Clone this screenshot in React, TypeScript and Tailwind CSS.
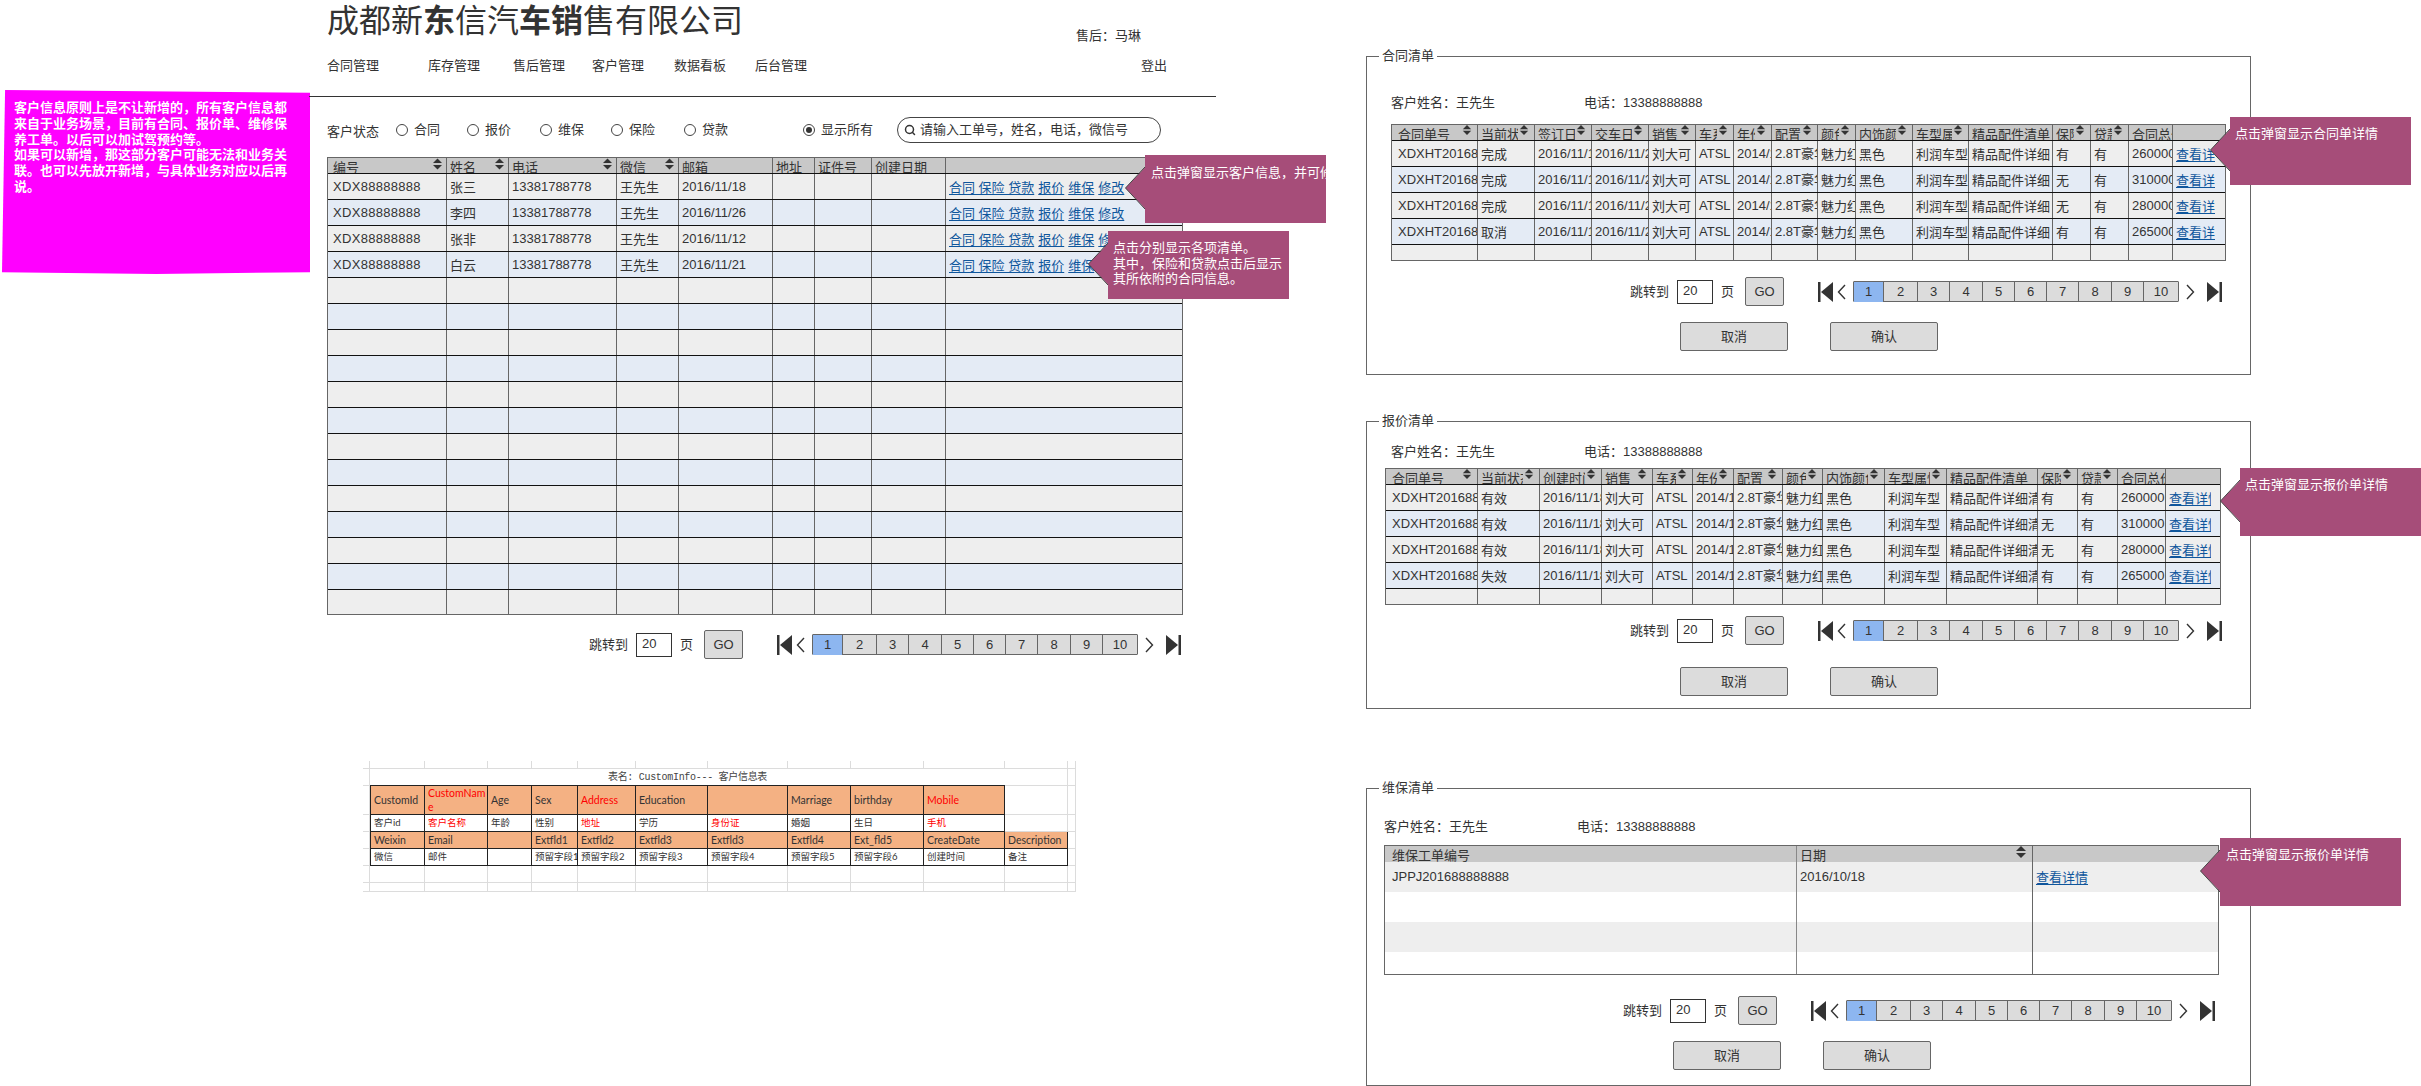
import type { ReactNode } from "react";
import { Search } from "lucide-react";

const FONT = "font-['Liberation_Sans','Noto_Sans_CJK_SC',sans-serif]";

function SortIcon({ className }: { className: string }) {
  return (
    <svg viewBox="0 0 10 12" className={"absolute " + className} fill="#333">
      <path d="M5 0 L10 5 H0 Z" />
      <path d="M5 12 L10 7 H0 Z" />
    </svg>
  );
}

function LinkText({ children }: { children: ReactNode }) {
  return <span className="text-[#0f569c] underline underline-offset-2">{children}</span>;
}

type Head = { label: string; sort?: boolean };

function DataTable({
  cols,
  width,
  heads,
  rows,
  lastRow,
  sortPos,
  firstPad,
}: {
  cols: string;
  width: string;
  heads: Head[];
  rows: ReactNode[][];
  lastRow: string;
  sortPos: string;
  firstPad: string;
}) {
  return (
    <div className={"border border-[#666] text-[13px] text-[#333] " + width}>
      <div className={"grid h-[16px] bg-[#c8c8c8] border-b border-[#111] " + cols}>
        {heads.map((h, i) => (
          <div
            key={i}
            className={
              "relative h-[15px] overflow-hidden whitespace-nowrap leading-[14px] pt-[3px] border-[#666] " +
              (i === heads.length - 1 ? "" : "border-r ") +
              (i === 0 ? firstPad : "pl-[3px]")
            }
          >
            <div className={"overflow-hidden " + (h.sort ? "mr-[16px]" : "")}>{h.label}</div>
            {h.sort && <SortIcon className={sortPos} />}
          </div>
        ))}
      </div>
      {rows.map((row, r) => {
        const isLast = r === rows.length - 1;
        return (
          <div
            key={r}
            className={
              "grid " +
              cols +
              " " +
              (r % 2 === 0 ? "bg-[#eeeeee] " : "bg-[#e4ebf5] ") +
              (isLast ? lastRow : "h-[26px] border-b border-[#111]")
            }
          >
            {row.map((c, i) => (
              <div
                key={i}
                className={
                  "flex items-center overflow-hidden whitespace-nowrap border-[#666] " +
                  (i === row.length - 1 ? "" : "border-r ") +
                  (i === 0 ? firstPad : "pl-[3px]")
                }
              >
                {c}
              </div>
            ))}
          </div>
        );
      })}
    </div>
  );
}

function Pager({ className }: { className: string }) {
  const pages = ["1", "2", "3", "4", "5", "6", "7", "8", "9", "10"];
  return (
    <div className={"flex items-center h-[29px] text-[13px] text-[#333] " + className}>
      <span className="w-[38px] whitespace-nowrap">跳转到</span>
      <div className="ml-[9px] w-[36px] h-[24px] border border-[#333] bg-white pl-[5px] leading-[20px]">20</div>
      <span className="ml-[8px] w-[13px]">页</span>
      <button className="ml-[11px] w-[39px] h-[29px] bg-[#dcdcdc] border border-[#666] rounded-[2px]">GO</button>
      <svg viewBox="0 0 15 20" className="ml-[34px] w-[15px] h-[20px]" fill="#333">
        <rect x="0" y="0" width="2.5" height="20" />
        <path d="M15 0 V20 L3 10 Z" />
      </svg>
      <svg viewBox="0 0 9 16" className="ml-[4px] w-[9px] h-[16px]" fill="none" stroke="#333" strokeWidth="1.4">
        <path d="M8 1 L1.5 8 L8 15" />
      </svg>
      <div className="ml-[7px] w-[326px] h-[21px] grid grid-cols-[30px_34px_32px_33px_32px_32px_32px_33px_32px_1fr] border border-[#666] rounded-[1px] bg-[#dcdcdc]">
        {pages.map((p, i) => (
          <div
            key={p}
            className={
              "flex items-center justify-center border-[#666] " +
              (i === 9 ? "" : "border-r ") +
              (i === 0 ? "bg-[#8db6f0]" : "")
            }
          >
            {p}
          </div>
        ))}
      </div>
      <svg viewBox="0 0 9 16" className="ml-[7px] w-[9px] h-[16px]" fill="none" stroke="#333" strokeWidth="1.4">
        <path d="M1 1 L7.5 8 L1 15" />
      </svg>
      <svg viewBox="0 0 15 20" className="ml-[12px] w-[15px] h-[20px]" fill="#333">
        <path d="M0 0 V20 L12 10 Z" />
        <rect x="12.5" y="0" width="2.5" height="20" />
      </svg>
    </div>
  );
}

function Actions({ className }: { className: string }) {
  return (
    <div className={"flex gap-[42px] text-[13px] text-[#333] " + className}>
      <button className="w-[108px] h-[29px] bg-[#dcdcdc] border border-[#666] rounded-[2px]">取消</button>
      <button className="w-[108px] h-[29px] bg-[#dcdcdc] border border-[#666] rounded-[2px]">确认</button>
    </div>
  );
}

function Callout({ className, children }: { className: string; children: ReactNode }) {
  return (
    <div className={"absolute w-[181px] h-[68px] bg-[#a64d79] text-white text-[13px] leading-[15.6px] " + className}>
      <svg viewBox="0 0 20 42" className="absolute -left-[20px] top-[12px] w-[20px] h-[42px]">
        <path d="M20.5 0 L0.5 21 L20.5 42 Z" fill="#a64d79" />
        <path d="M20 0 L0.5 21 L20 42" fill="none" stroke="#444" strokeWidth="1" />
      </svg>
      {children}
    </div>
  );
}

function Panel({
  title,
  className,
  children,
}: {
  title: string;
  className: string;
  children: ReactNode;
}) {
  return (
    <div className={"absolute left-[1366px] w-[885px] border border-[#666] " + className}>
      <div className="absolute left-[12px] -top-[9px] bg-white px-[3px] text-[13px] leading-[16px] text-[#333]">
        {title}
      </div>
      {children}
    </div>
  );
}

function CustomerLine({ className }: { className: string }) {
  return (
    <div className={"flex h-[18px] leading-[18px] text-[13px] text-[#333] " + className}>
      <span className="w-[193px]">客户姓名：王先生</span>
      <span>电话：13388888888</span>
    </div>
  );
}

const mainHeads: Head[] = [
  { label: "编号", sort: true },
  { label: "姓名", sort: true },
  { label: "电话", sort: true },
  { label: "微信", sort: true },
  { label: "邮箱" },
  { label: "地址" },
  { label: "证件号" },
  { label: "创建日期" },
  { label: "" },
];

const customers = [
  ["张三", "2016/11/18"],
  ["李四", "2016/11/26"],
  ["张非", "2016/11/12"],
  ["白云", "2016/11/21"],
];

const mainRows: ReactNode[][] = [
  ...customers.map(([name, date]) => [
    <span className="tracking-[0.3px]">XDX88888888</span>,
    <span className="pt-[3px]">{name}</span>,
    "13381788778",
    <span className="pt-[3px]">王先生</span>,
    date,
    "",
    "",
    "",
    <div className="flex gap-[4px] pt-[3px]">
      <LinkText>合同 保险 贷款</LinkText>
      <LinkText>报价</LinkText>
      <LinkText>维保</LinkText>
      <LinkText>修改</LinkText>
    </div>,
  ]),
  ...Array.from({ length: 13 }, () => ["", "", "", "", "", "", "", "", ""]),
];

const contractHeads: Head[] = [
  { label: "合同单号", sort: true },
  { label: "当前状态", sort: true },
  { label: "签订日期", sort: true },
  { label: "交车日期", sort: true },
  { label: "销售", sort: true },
  { label: "车系", sort: true },
  { label: "年份", sort: true },
  { label: "配置", sort: true },
  { label: "颜色", sort: true },
  { label: "内饰颜色", sort: true },
  { label: "车型属性", sort: true },
  { label: "精品配件清单" },
  { label: "保险", sort: true },
  { label: "贷款", sort: true },
  { label: "合同总价" },
  { label: "" },
];

const quoteHeads: Head[] = [
  { label: "合同单号", sort: true },
  { label: "当前状态", sort: true },
  { label: "创建时间", sort: true },
  { label: "销售", sort: true },
  { label: "车系", sort: true },
  { label: "年份", sort: true },
  { label: "配置", sort: true },
  { label: "颜色", sort: true },
  { label: "内饰颜色", sort: true },
  { label: "车型属性", sort: true },
  { label: "精品配件清单" },
  { label: "保险", sort: true },
  { label: "贷款", sort: true },
  { label: "合同总价" },
  { label: "" },
];

const cjk = (t: string) => <span className="pt-[3px]">{t}</span>;

const contractRows: ReactNode[][] = [
  ["完成", "有", "260000"],
  ["完成", "无", "310000"],
  ["完成", "无", "280000"],
  ["取消", "有", "265000"],
]
  .map(([state, ins, total]) => [
    "XDXHT2016888888",
    cjk(state),
    "2016/11/18",
    "2016/11/20",
    cjk("刘大可"),
    "ATSL",
    "2014/10",
    "2.8T豪华",
    cjk("魅力红"),
    cjk("黑色"),
    cjk("利润车型"),
    cjk("精品配件详细"),
    cjk(ins),
    cjk("有"),
    total,
    <div className="w-[39px] overflow-hidden pt-[3px]">
      <LinkText>查看详情</LinkText>
    </div>,
  ] as ReactNode[])
  .concat([Array.from({ length: 16 }, () => "")]);

const quoteRows: ReactNode[][] = [
  ["有效", "有", "260000"],
  ["有效", "无", "310000"],
  ["有效", "无", "280000"],
  ["失效", "有", "265000"],
]
  .map(([state, ins, total]) => [
    "XDXHT2016888888",
    cjk(state),
    "2016/11/18",
    cjk("刘大可"),
    "ATSL",
    "2014/10",
    "2.8T豪华版",
    cjk("魅力红"),
    cjk("黑色"),
    cjk("利润车型"),
    cjk("精品配件详细清单"),
    cjk(ins),
    cjk("有"),
    total,
    <div className="w-[42px] overflow-hidden pt-[3px]">
      <LinkText>查看详情</LinkText>
    </div>,
  ] as ReactNode[])
  .concat([Array.from({ length: 15 }, () => "")]);

type DbCell = { t?: string; red?: boolean; cjk?: boolean };

const dbHeadA: DbCell[] = [
  { t: "CustomId" },
  { t: "CustomNam\ne", red: true },
  { t: "Age" },
  { t: "Sex" },
  { t: "Address", red: true },
  { t: "Education" },
  {},
  { t: "Marriage" },
  { t: "birthday" },
  { t: "Mobile", red: true },
];
const dbRowA: DbCell[] = [
  { t: "客户id", cjk: true },
  { t: "客户名称", red: true, cjk: true },
  { t: "年龄", cjk: true },
  { t: "性别", cjk: true },
  { t: "地址", red: true, cjk: true },
  { t: "学历", cjk: true },
  { t: "身份证", red: true, cjk: true },
  { t: "婚姻", cjk: true },
  { t: "生日", cjk: true },
  { t: "手机", red: true, cjk: true },
];
const dbHeadB: DbCell[] = [
  { t: "Weixin" },
  { t: "Email" },
  {},
  { t: "Extfld1" },
  { t: "Extfld2" },
  { t: "Extfld3" },
  { t: "Extfld3" },
  { t: "Extfld4" },
  { t: "Ext_fld5" },
  { t: "CreateDate" },
  { t: "Description" },
];
const dbRowB: DbCell[] = [
  { t: "微信", cjk: true },
  { t: "邮件", cjk: true },
  {},
  { t: "预留字段1", cjk: true },
  { t: "预留字段2", cjk: true },
  { t: "预留字段3", cjk: true },
  { t: "预留字段4", cjk: true },
  { t: "预留字段5", cjk: true },
  { t: "预留字段6", cjk: true },
  { t: "创建时间", cjk: true },
  { t: "备注", cjk: true },
];

const LIGHT = "border-r border-b border-[#dcdcdc]";

function DbRow({ cells, orange }: { cells: DbCell[]; orange?: boolean }) {
  const blanks = 11 - cells.length;
  return (
    <>
      <div className={LIGHT} />
      {cells.map((c, i) => (
        <div
          key={i}
          className={
            "flex items-center pl-[3px] overflow-hidden whitespace-pre leading-[14px] border-r border-b border-[#222] " +
            (i === 0 ? "border-l " : "") +
            (orange ? "bg-[#f4b183] " : "bg-white ") +
            (c.red ? "text-[#ff0000] " : "text-[#333] ") +
            (c.cjk ? "text-[9.5px]" : "text-[10.5px]")
          }
        >
          {c.t}
        </div>
      ))}
      {blanks > 0 && <div className={LIGHT} />}
      <div className={LIGHT} />
    </>
  );
}

function DbSheet() {
  const blankRow = (n: number) => Array.from({ length: n }, (_, i) => <div key={i} className={LIGHT} />);
  return (
    <div className="absolute left-[363px] top-[761px] grid w-[713px] h-[131px] grid-cols-[7px_55px_63px_44px_46px_58px_72px_80px_63px_73px_81px_63px_8px] grid-rows-[8px_17px_29px_17px_17px_17px_17px_9px] font-['Lato','Noto_Sans_CJK_SC',sans-serif]">
      {blankRow(13)}
      <div className={LIGHT} />
      <div className="col-span-10 flex items-center justify-center border-b border-[#222] font-['Liberation_Mono','Noto_Sans_CJK_SC',monospace] text-[10px] tracking-[-0.3px] text-[#444]">
        表名: CustomInfo--- 客户信息表
      </div>
      <div className={LIGHT} />
      <div className={LIGHT} />
      <DbRow cells={dbHeadA} orange />
      <DbRow cells={dbRowA} />
      <DbRow cells={dbHeadB} orange />
      <DbRow cells={dbRowB} />
      {blankRow(13)}
      {blankRow(13)}
    </div>
  );
}

function RadioItem({ label, width, checked }: { label: string; width: string; checked?: boolean }) {
  return (
    <div className={"flex items-center gap-[6px] " + width}>
      <span className="flex items-center justify-center w-[12px] h-[12px] rounded-full border border-[#444] bg-white">
        {checked && <span className="w-[6px] h-[6px] rounded-full bg-[#333]" />}
      </span>
      <span>{label}</span>
    </div>
  );
}

export default function App() {
  const navItems = [
    { label: "合同管理", w: "w-[101px]" },
    { label: "库存管理", w: "w-[85px]" },
    { label: "售后管理", w: "w-[79px]" },
    { label: "客户管理", w: "w-[82px]" },
    { label: "数据看板", w: "w-[81px]" },
    { label: "后台管理", w: "w-[386px]" },
  ];

  return (
    <div className={"relative w-[2421px] h-[1086px] overflow-hidden bg-white text-[#333] " + FONT}>
      {/* 说明 */}
      <div className="absolute left-[2px] top-[90px] w-[308px] h-[184px] bg-[#ff00ff] pl-[12px] pr-[20px] pt-[10px] text-[13px] leading-[15.8px] font-bold text-white [clip-path:polygon(1%_0,100%_1.5%,100%_99%,50%_100%,0_99%)]">
        客户信息原则上是不让新增的，所有客户信息都来自于业务场景，目前有合同、报价单、维修保养工单。以后可以加试驾预约等。
        <br />
        如果可以新增，那这部分客户可能无法和业务关联。也可以先放开新增，与具体业务对应以后再说。
      </div>

      {/* 客户管理主页面 */}
      <div className="absolute left-[327px] top-0 w-[889px]">
        <div className="flex h-[54px]">
          <h1 className="shrink-0 w-[415px] text-[32px] leading-[42px] text-[#333] whitespace-nowrap">
            成都新<b>东</b>信汽<b>车销</b>售有限公司
          </h1>
          <span className="ml-[334px] mt-[27px] text-[13px] leading-[18px] whitespace-nowrap">售后：马琳</span>
        </div>
        <div className="flex h-[24px] items-center text-[13px]">
          {navItems.map((n) => (
            <span key={n.label} className={n.w}>
              {n.label}
            </span>
          ))}
          <span>登出</span>
        </div>
        <div className="mt-[18px] -ml-[18px] w-[907px] h-px bg-[#333]" />
        <div className="mt-[20px] flex h-[26px] items-center text-[13px]">
          <span className="w-[69px] pt-[3px]">客户状态</span>
          <RadioItem label="合同" width="w-[71px]" />
          <RadioItem label="报价" width="w-[73px]" />
          <RadioItem label="维保" width="w-[71px]" />
          <RadioItem label="保险" width="w-[73px]" />
          <RadioItem label="贷款" width="w-[119px]" />
          <RadioItem label="显示所有" width="w-[94px]" checked />
          <div className="flex items-center w-[264px] h-[26px] rounded-[13px] border border-[#444] pl-[6px] gap-[4px] whitespace-nowrap">
            <Search size={12} strokeWidth={3} color="#333" />
            <span>请输入工单号，姓名，电话，微信号</span>
          </div>
        </div>
        <div className="mt-[14px]">
          <DataTable
            cols="grid-cols-[119px_62px_108px_62px_94px_42px_57px_74px_1fr]"
            width="w-[856px]"
            heads={mainHeads}
            rows={mainRows}
            lastRow="h-[24px]"
            sortPos="right-[4px] top-0 w-[9px] h-[12px]"
            firstPad="pl-[5px]"
          />
        </div>
        <Pager className="mt-[15px] ml-[262px]" />
      </div>

      <DbSheet />

      {/* 合同清单 */}
      <Panel title="合同清单" className="top-[56px] h-[319px]">
        <CustomerLine className="mt-[37px] ml-[24px]" />
        <div className="mt-[12px] ml-[24px]">
          <DataTable
            cols="grid-cols-[86px_57px_57px_57px_47px_38px_38px_46px_38px_57px_56px_84px_38px_38px_44px_1fr]"
            width="w-[835px]"
            heads={contractHeads}
            rows={contractRows}
            lastRow="h-[15px]"
            sortPos="right-[5px] top-0 w-[10px] h-[10px]"
            firstPad="pl-[6px]"
          />
        </div>
        <Pager className="mt-[16px] ml-[263px]" />
        <Actions className="mt-[16px] ml-[313px]" />
      </Panel>

      {/* 报价清单 */}
      <Panel title="报价清单" className="top-[421px] h-[288px]">
        <CustomerLine className="mt-[21px] ml-[24px]" />
        <div className="mt-[7px] ml-[18px]">
          <DataTable
            cols="grid-cols-[92px_62px_62px_51px_40px_41px_49px_40px_62px_62px_91px_40px_40px_48px_1fr]"
            width="w-[836px]"
            heads={quoteHeads}
            rows={quoteRows}
            lastRow="h-[15px]"
            sortPos="right-[5px] top-0 w-[10px] h-[10px]"
            firstPad="pl-[6px]"
          />
        </div>
        <Pager className="mt-[11px] ml-[263px]" />
        <Actions className="mt-[22px] ml-[313px]" />
      </Panel>

      {/* 维保清单 */}
      <Panel title="维保清单" className="top-[788px] h-[298px]">
        <CustomerLine className="mt-[29px] ml-[17px]" />
        <div className="mt-[9px] ml-[17px] w-[835px] border border-[#666] text-[13px]">
          <div className="grid grid-cols-[412px_236px_1fr] h-[16px] bg-[#c8c8c8]">
            <div className="overflow-hidden border-r border-[#888] pl-[7px] pt-[3px] leading-[14px]">维保工单编号</div>
            <div className="relative overflow-hidden border-r border-[#666] pl-[3px] pt-[3px] leading-[14px]">
              日期
              <SortIcon className="right-[6px] top-0 w-[10px] h-[12px]" />
            </div>
            <div />
          </div>
          <div className="grid grid-cols-[412px_236px_1fr] h-[30px] bg-[#eeeeee]">
            <div className="border-r border-[#888] pl-[7px] leading-[30px]">JPPJ201688888888</div>
            <div className="border-r border-[#666] pl-[3px] leading-[30px]">2016/10/18</div>
            <div className="pl-[3px] pt-[6px]">
              <LinkText>查看详情</LinkText>
            </div>
          </div>
          <div className="grid grid-cols-[412px_236px_1fr] h-[30px]">
            <div className="border-r border-[#888]" />
            <div className="border-r border-[#666]" />
          </div>
          <div className="grid grid-cols-[412px_236px_1fr] h-[30px] bg-[#eeeeee]">
            <div className="border-r border-[#888]" />
            <div className="border-r border-[#666]" />
          </div>
          <div className="grid grid-cols-[412px_236px_1fr] h-[22px]">
            <div className="border-r border-[#888]" />
            <div className="border-r border-[#666]" />
          </div>
        </div>
        <Pager className="mt-[21px] ml-[256px]" />
        <Actions className="mt-[16px] ml-[306px]" />
      </Panel>

      {/* 批注 */}
      <Callout className="left-[1145px] top-[155px] pl-[6px] pt-[10px] whitespace-nowrap">
        <div className="w-[175px] overflow-hidden">点击弹窗显示客户信息，并可修改。</div>
      </Callout>
      <Callout className="left-[1108px] top-[231px] pl-[5px] pt-[9px] pr-[4px]">
        点击分别显示各项清单。
        <br />
        其中，保险和贷款点击后显示其所依附的合同信息。
      </Callout>
      <Callout className="left-[2230px] top-[117px] pl-[5px] pt-[9px]">点击弹窗显示合同单详情</Callout>
      <Callout className="left-[2240px] top-[468px] pl-[5px] pt-[9px]">点击弹窗显示报价单详情</Callout>
      <Callout className="left-[2220px] top-[838px] pl-[6px] pt-[9px]">点击弹窗显示报价单详情</Callout>
    </div>
  );
}
